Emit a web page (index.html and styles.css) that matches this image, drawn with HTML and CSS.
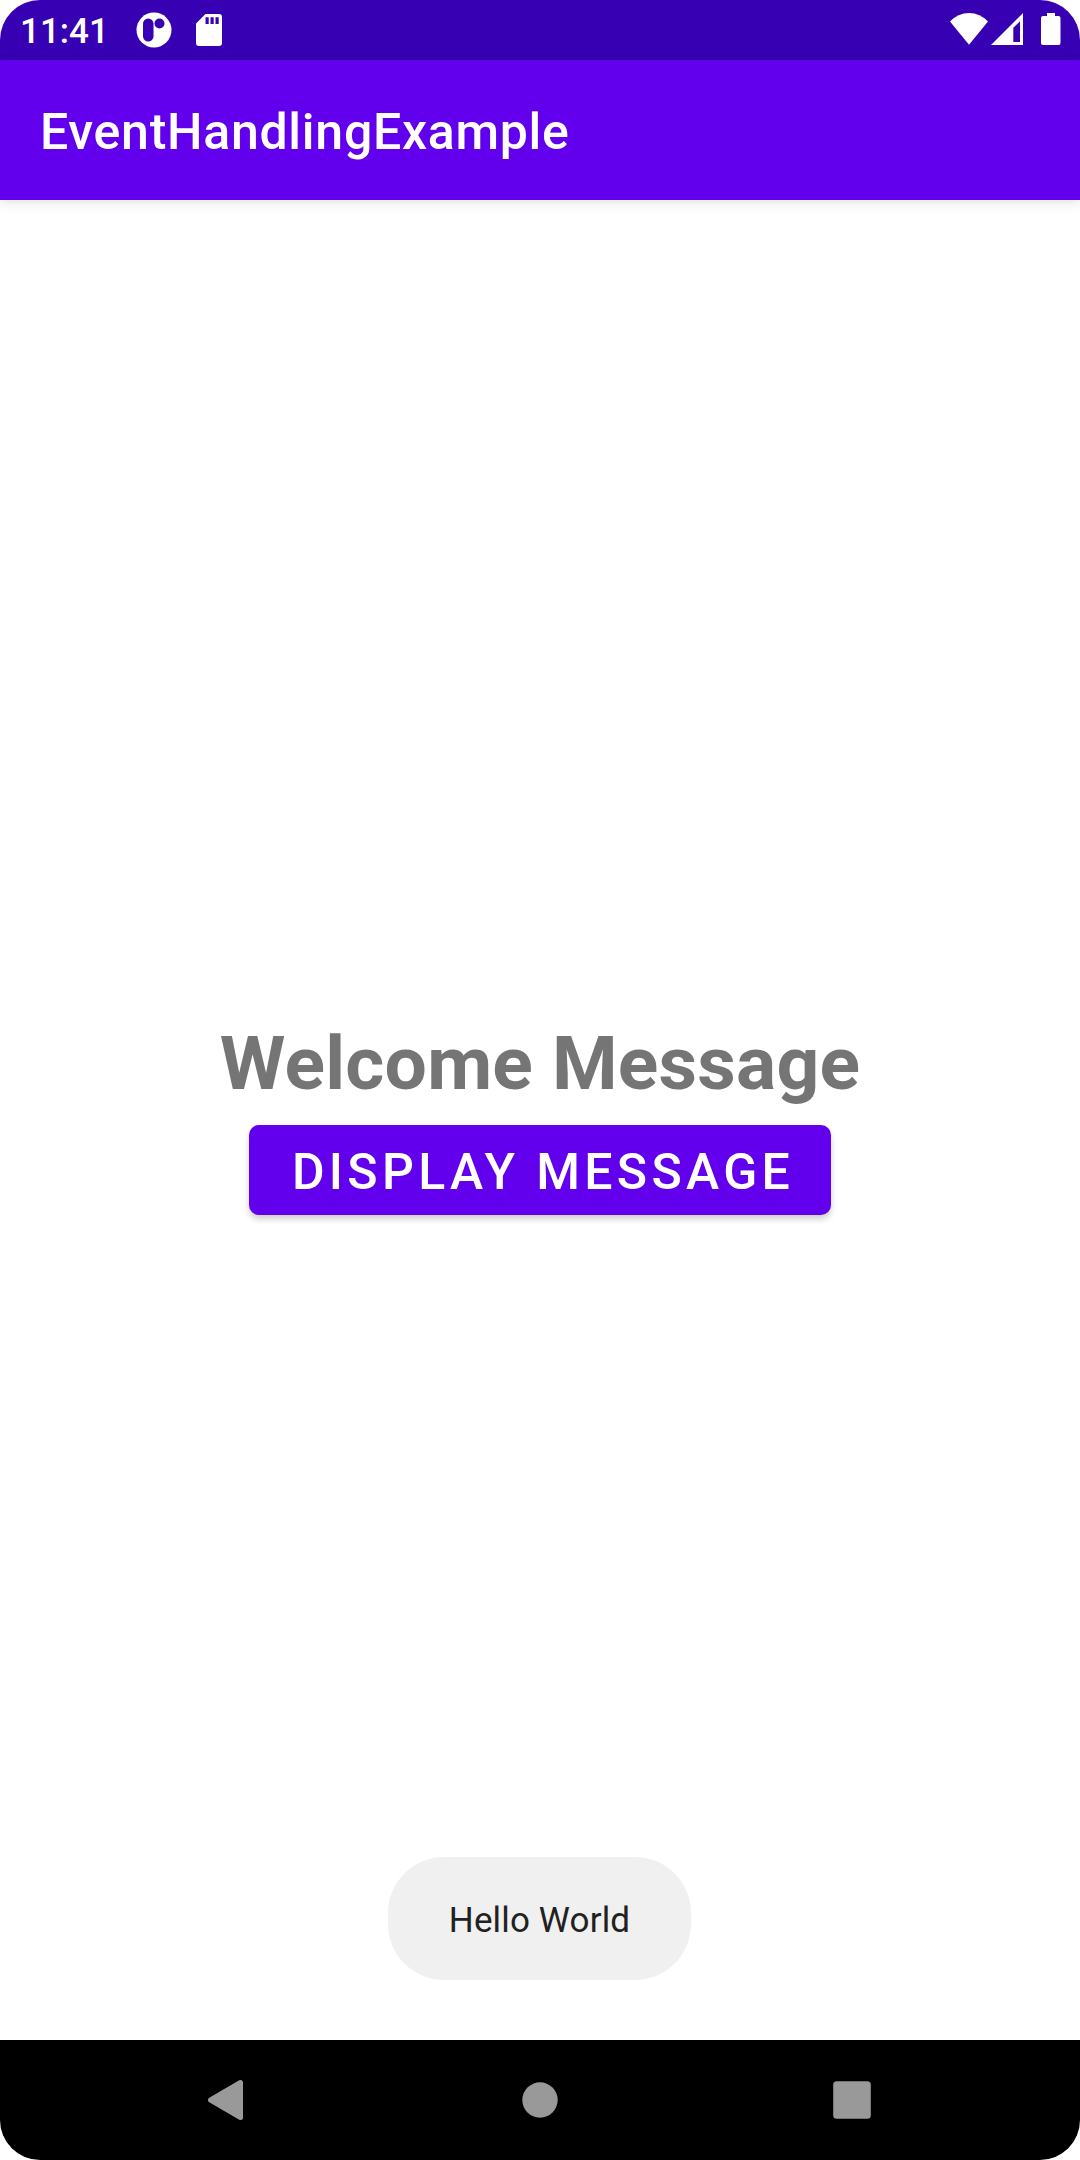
FILE: index.html
```html
<!DOCTYPE html>
<html lang="en">
<head>
<meta charset="utf-8">
<title>EventHandlingExample</title>
<link rel="stylesheet" href="styles.css">
</head>
<body>
<div class="screen">
  <header class="status-bar">
    <span class="clock">11:41</span>
    <svg class="icon-app" width="36" height="36" viewBox="0 0 36 36">
      <circle cx="18" cy="18" r="17.5" fill="#fff"/>
      <rect x="7" y="6.5" width="10.5" height="23" rx="5.2" fill="#3700b3"/>
      <circle cx="23.5" cy="11.500" r="5" fill="#3700b3"/>
    </svg>
    <svg class="icon-card" width="26" height="32" viewBox="0 0 26 32">
      <path d="M9.500 0H23q3 0 3 3V29q0 3-3 3H3q-3 0-3-3V9.500Z" fill="#fff"/>
      <path d="M9.500 3.200h3.200v6.800H9.500zM14.500 3.200h3.200v6.800h-3.200zM19.500 3.200h3.200v6.800h-3.200z" fill="#3700b3"/>
    </svg>
    <svg class="icon-wifi" width="38" height="32" viewBox="0 0 38 32">
      <path d="M0 8.500Q8 0 19 0T38 8.500L19 31.800Z" fill="#fff"/>
    </svg>
    <svg class="icon-signal" width="32" height="32" viewBox="0 0 32 32">
      <path d="M32 0V32H0ZM29 8.300L22.300 14.800V29H29Z" fill="#fff" fill-rule="evenodd"/>
    </svg>
    <svg class="icon-battery" width="20" height="32" viewBox="0 0 20 32">
      <path d="M6 0H14V3H17.500Q19.500 3 19.500 5V30Q19.500 32 17.500 32H2Q0 32 0 30V5Q0 3 2 3H6Z" fill="#fff"/>
    </svg>
  </header>
  <div class="app-bar"><h1 class="app-title">EventHandlingExample</h1></div>
  <main class="content">
    <p class="message">Welcome Message</p>
    <button class="display-button" type="button">DISPLAY MESSAGE</button>
    <div class="toast" role="status">Hello World</div>
  </main>
  <nav class="nav-bar">
    <svg width="60" height="60" viewBox="0 0 60 60"><path d="M12.500 30L42.500 12.500V47.500Z" fill="#999" stroke="#999" stroke-width="5" stroke-linejoin="round"/></svg>
    <svg width="60" height="60" viewBox="0 0 60 60"><circle cx="30" cy="30" r="17.700" fill="#999"/></svg>
    <svg width="60" height="60" viewBox="0 0 60 60"><rect x="11.200" y="11.200" width="37.600" height="37.600" rx="3.500" fill="#999"/></svg>
  </nav>
</div>
</body>
</html>
```
FILE: styles.css
```css
body {
  margin: 0;
  background: #fff;
  font-family: Roboto, sans-serif;
}

.screen {
  display: flex;
  flex-direction: column;
  width: 1080px;
  height: 2160px;
  border-radius: 40px;
  overflow: hidden;
}

.status-bar {
  display: flex;
  align-items: flex-start;
  box-sizing: border-box;
  height: 60px;
  padding: 13px 19px 0 20px;
  background: #3700b3;
}

.clock {
  width: 116px;
  margin-top: -2px;
  font-size: 35px;
  font-weight: 500;
  line-height: 41px;
  color: #fff;
}

.icon-app { margin-top: -1px; }
.icon-card { margin: 1px 0 0 24px; }
.icon-wifi { margin-left: auto; }
.icon-signal { margin-left: 3px; }
.icon-battery { margin: 0 0 0 18px; }

.app-bar {
  display: flex;
  align-items: center;
  flex: none;
  height: 140px;
  padding-left: 40px;
  background: #6200ee;
  box-shadow: 0 2px 12px rgba(0, 0, 0, 0.13);
}

.app-title {
  margin: 3px 0 0;
  font-size: 50px;
  font-weight: 500;
  line-height: 60px;
  letter-spacing: 0.73px;
  color: #fff;
}

.content {
  display: flex;
  flex-direction: column;
  align-items: center;
  flex: 1;
}

.message {
  margin: 818px 0 0;
  font-size: 75px;
  font-weight: 700;
  line-height: 90px;
  letter-spacing: 0.22px;
  color: #757575;
}

.display-button {
  width: 582px;
  height: 90px;
  margin-top: 17px;
  padding: 4px 0 0 6px;
  border: 0;
  border-radius: 10px;
  background: #6200ee;
  box-shadow: 0 4px 6px rgba(0, 0, 0, 0.2);
  font: 500 50px/60px Roboto, sans-serif;
  letter-spacing: 4.32px;
  white-space: nowrap;
  color: #fff;
}

.toast {
  box-sizing: border-box;
  width: 303px;
  height: 123px;
  margin: auto 1px 60px 0;
  padding-top: 3px;
  border-radius: 56px;
  background: #f0f0f0;
  font-size: 35px;
  line-height: 121px;
  letter-spacing: 0.15px;
  text-align: center;
  color: #212121;
}

.nav-bar {
  display: flex;
  align-items: center;
  justify-content: center;
  gap: 252px;
  flex: none;
  height: 120px;
  background: #000;
}
```
